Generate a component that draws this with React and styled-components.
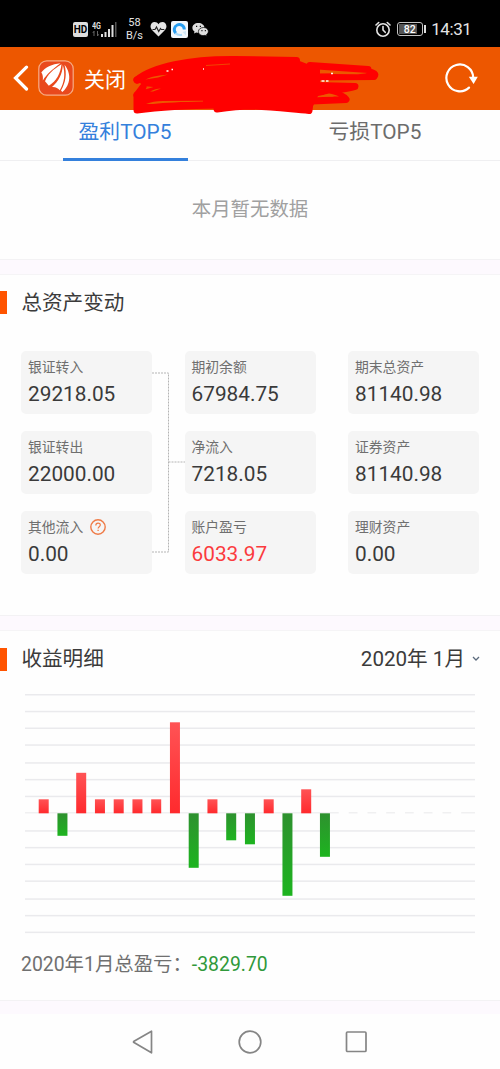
import React, { useState } from 'react'
import styled, { createGlobalStyle } from 'styled-components'

const GlobalStyle = createGlobalStyle`
  * {
    box-sizing:border-box;
  }
  body{
    margin:0;
    background:#fefefe;
    font-family:Roboto, 'Noto Sans CJK SC', sans-serif;
    color:#3b3b3b;
  }
`
const Page = styled.div`
  width:500px;
  height:1069px;
  overflow:hidden;
  display:flex;
  flex-direction:column;
`
const StatusBar = styled.div`
  height:47px;
  flex:none;
  background:#000;
  color:#e4e4e4;
  display:flex;
  align-items:center;
  justify-content:space-between;
  padding:11px 28.5px 0 73px;
`
const StatusGroup = styled.div`
  display:flex;
  align-items:center;
  gap:${props => props.$gap || 4}px;
`
const HdBadge = styled.div`
  width:15px;
  height:15px;
  border-radius:2px;
  background:#dedede;
  color:#000;
  font-size:10px;
  font-weight:700;
  line-height:15px;
  text-align:center;
`
const Speed = styled.div`
  width:22px;
  font-size:11px;
  line-height:13px;
  text-align:center;
  margin:0 .5px 0 1.5px;
`
const Battery = styled.div`
  display:flex;
  align-items:center;
  gap:1px;
  &:after{
    content:'';
    width:2px;
    height:8px;
    background:#dcdcdc;
  }
`
const BatteryBody = styled.div`
  width:26px;
  height:14px;
  border:1px solid #c4c4c4;
  border-radius:3px;
  padding:1px;
  span{
    display:block;
    height:10px;
    line-height:11px;
    font-size:10.5px;
    font-weight:500;
    text-align:center;
    color:#fff;
    background:linear-gradient(90deg, #555 84%, transparent 84%);
  }
`
const Clock = styled.div`
  font-size:17px;
  line-height:20px;
  letter-spacing:-.4px;
`
const Header = styled.div`
  position:relative;
  height:62.5px;
  flex:none;
  background:#ed5700;
  color:#fff;
  display:flex;
  align-items:center;
  padding:0 22px 0 13px;
`
const CloseText = styled.div`
  flex:1;
  font-size:21px;
  line-height:30px;
  margin-left:10px;
  padding-top:3px;
`
const Scribble = styled.svg`
  position:absolute;
  left:130px;
  top:5px;
`
const Tabs = styled.div`
  height:51.5px;
  flex:none;
  display:flex;
  border-bottom:1px solid #efeff1;
`
const Tab = styled.div`
  flex:1;
  display:flex;
  justify-content:center;
  font-size:20.8px;
  line-height:45px;
  color:${props => props.$active ? '#3480dc' : '#6c6c6c'};
  cursor:pointer;
  span{
    width:125px;
    height:51.5px;
    text-align:center;
    white-space:nowrap;
    border-bottom:3px solid ${props => props.$active ? '#3480dc' : 'transparent'};
  }
`
const Empty = styled.div`
  height:98px;
  flex:none;
  line-height:98px;
  text-align:center;
  font-size:19.4px;
  color:#a0a0a0;
`
const Band = styled.div`
  height:${props => props.$height || 16}px;
  flex:none;
  background:#fdf9fe;
  border-top:1px solid #f3f2f4;
  border-bottom:${props => props.$last ? 'none' : '1px solid #f5f4f6'};
`
const SectionHead = styled.div`
  height:56px;
  flex:none;
  display:flex;
  align-items:center;
  justify-content:space-between;
  padding:${props => props.$drop || 0}px 20px 0 0;
  font-size:20.6px;
  line-height:30px;
`
const SectionTitle = styled.div`
  display:flex;
  align-items:center;
  gap:14.4px;
  &:before{
    content:'';
    width:7px;
    height:23px;
    background:#ff5400;
  }
`
const Month = styled.div`
  display:flex;
  align-items:center;
  gap:7px;
`
const Assets = styled.div`
  position:relative;
  height:284px;
  flex:none;
  padding:20.5px 21px 0;
  display:grid;
  grid-template-columns:repeat(3, 131px);
  grid-auto-rows:62.5px;
  align-content:start;
  justify-content:space-between;
  row-gap:17.5px;
`
const Card = styled.div`
  background:#f5f5f5;
  border-radius:5px;
  padding:4px 7px 0;
`
const CardLabel = styled.div`
  display:flex;
  align-items:center;
  gap:7px;
  height:22px;
  font-size:13.8px;
  color:#6f6f6f;
  svg{
    margin-top:2px;
  }
`
const CardValue = styled.div`
  font-size:20.8px;
  line-height:31px;
  padding-top:2px;
  color:${props => props.$profit ? '#fb3b3e' : '#3a3a3a'};
`
const Links = styled.svg`
  position:absolute;
  left:152px;
  top:40px;
`
const Chart = styled.svg`
  display:block;
  flex:none;
`
const Summary = styled.div`
  height:64px;
  flex:none;
  line-height:57px;
  padding-left:21px;
  font-size:19.4px;
  color:#707070;
  span{
    color:#30993a;
  }
`
const NavBar = styled.div`
  flex:1;
  display:flex;
  align-items:center;
  justify-content:center;
  gap:82px;
  padding-top:1px;
`

const cards = [
  { label: '银证转入', value: '29218.05' },
  { label: '期初余额', value: '67984.75' },
  { label: '期末总资产', value: '81140.98' },
  { label: '银证转出', value: '22000.00' },
  { label: '净流入', value: '7218.05' },
  { label: '证券资产', value: '81140.98' },
  { label: '其他流入', value: '0.00', help: true },
  { label: '账户盈亏', value: '6033.97', profit: true },
  { label: '理财资产', value: '0.00' },
]

// bar lengths for every trading day, 0 = no data yet
const days = [14, -22.5, 40.5, 14, 14, 14, 14, 91, -54.5, 14, -27, -31, 14, -82.5, 24, -43.5, 0, 0, 0, 0, 0, 0, 0]
const gridLines = [8, 24.8, 41.5, 58.3, 76.2, 92.9, 109.7, 126, 144.2, 160.9, 177.7, 194.4, 212.3, 228.9, 245.6]
const AXIS = 126.3

function SignalIcon() {
  return (
    <svg width="26" height="17" viewBox="0 0 26 17" fill="#dedede">
      <text x="0" y="8" fontSize="9" fontWeight="700" fontFamily="Roboto" textLength="9" lengthAdjust="spacingAndGlyphs">4G</text>
      <path d="M2 10v5M.8 12L2 10.3M5.500 10v5M6.700 13.300L5.500 15" stroke="#666" fill="none" />
      <path d="M9 13h2v3H9zM12.500 11h2v5h-2zM16 8h2v8h-2zM19.500 4h2v12h-2z" />
      <path d="M23 1h1.500v15H23z" fill="#555" />
    </svg>
  )
}

function HeartIcon() {
  return (
    <svg width="17" height="16" viewBox="0 0 17 16">
      <path d="M8.500 15.500L2 9C-1 5.500 1 1 4.600 1c1.700 0 3.100.9 3.900 2.200C9.300 1.900 10.700 1 12.400 1 16 1 18 5.500 15 9z" fill="#e4e4e4" />
      <path d="M2.500 8.500H5l1.500-2.500 2.200 4.500 1.800-3 .8 1h3" fill="none" stroke="#222" strokeWidth="1.100" />
    </svg>
  )
}

function BrowserIcon() {
  return (
    <svg width="17" height="17" viewBox="0 0 17 17">
      <rect width="17" height="17" rx="2" fill="#f2f7fb" />
      <path d="M5 12.300A5 5 0 1 1 13.300 8.500" fill="none" stroke="#279df0" strokeWidth="3" />
      <path d="M4.500 12c2 2.200 4.500 2.300 6.500 1.800" fill="none" stroke="#a8d8f8" strokeWidth="2" />
      <path d="M11.500 11l3.500-1v4.500z" fill="#cfe6f5" />
    </svg>
  )
}

function WechatIcon() {
  return (
    <svg width="17" height="15" viewBox="0 0 17 15">
      <path d="M6.300 1C2.900 1 .4 3.100.4 5.800c0 1.600.8 2.900 2.100 3.800L2 11.500l2.200-1.100c4.500 1.200 8.300-1 8.300-4.600C12.500 3.100 9.700 1 6.300 1z" fill="#dedede" />
      <path d="M11.500 5.500c-2.900 0-5.100 1.800-5.100 4 0 3 3.300 4.700 6.600 3.800l1.900 1-.5-1.600c3.800-2.800 1.700-7.200-2.900-7.200z" fill="#dedede" stroke="#000" strokeWidth=".7" />
      <path d="M4 4.300h1.200M7.800 4.300H9M9.400 8.700h1.100M12.800 8.700h1.100" stroke="#111" strokeWidth="1.300" />
    </svg>
  )
}

function AlarmIcon() {
  return (
    <svg width="16" height="17" viewBox="0 0 16 17" fill="none" stroke="#e4e4e4" strokeWidth="1.600" strokeLinecap="round">
      <circle cx="8" cy="9" r="6.200" />
      <path d="M8 5.500V9l2.200 2.300M1 4l2.700-2.500M15 4l-2.700-2.500" />
    </svg>
  )
}

function LogoIcon() {
  return (
    <svg width="36" height="36" viewBox="0 0 36 36" style={{ marginLeft: 9 }}>
      <rect x=".8" y=".8" width="34.400" height="34.400" rx="8" fill="#e9491d" stroke="#f7ac85" strokeWidth="1.200" />
      <path d="M22.500 3.300C14 4 7 7.500 3.300 12.500c1.500 2 1.900 4.500 1.500 8C9 14 14 9.500 22.500 3.300z" fill="#fff" />
      <path d="M23.500 4.300C15 9.500 9.500 14.500 7 21.200l3.800 4.600C18.500 21 22.500 13.500 23.500 4.300z" fill="#fff" />
      <path d="M24.800 5C24.500 14 20.500 21.500 14 27c3.500-.3 6 1 7.800 3.300C26.500 22.500 27.500 13.500 24.800 5z" fill="#fff" />
      <path d="M26.500 4.800c4.300 5.500 6 12.200 3.900 18.200-1.300 3.700-3.300 6.700-6.100 9l-1.300-1.500C27.800 22.500 29 13.800 26.500 4.800z" fill="#fff" />
    </svg>
  )
}

function RefreshIcon() {
  return (
    <svg width="34" height="32" viewBox="0 0 34 32">
      <path d="M25 25.600A13.400 13.400 0 1 1 29.200 15.500" fill="none" stroke="#fff" strokeWidth="2.200" strokeLinecap="round" />
      <path d="M24.800 14.700h9L29.600 22z" fill="#fff" />
    </svg>
  )
}

function HelpIcon() {
  return (
    <svg width="16" height="16" viewBox="0 0 16 16" fill="none" stroke="#ef7b47">
      <circle cx="8" cy="8" r="7.200" strokeWidth="1.400" />
      <path d="M5.800 6.400c0-3 4.500-3 4.500-.3 0 1.600-2.200 1.800-2.200 3.500" strokeWidth="1.200" />
      <path d="M8.100 10.700V12" strokeWidth="1.300" />
    </svg>
  )
}

function ProfitChart() {
  return (
    <Chart width="500" height="249" viewBox="0 0 500 249">
      <defs>
        <linearGradient id="up" x1="0" y1="0" x2="0" y2="1">
          <stop offset="0" stopColor="#ff5355" />
          <stop offset="1" stopColor="#ff2a2d" />
        </linearGradient>
        <linearGradient id="down" x1="0" y1="0" x2="0" y2="1">
          <stop offset="0" stopColor="#2e912f" />
          <stop offset="1" stopColor="#1db41f" />
        </linearGradient>
      </defs>
      {gridLines.map(y => <rect key={y} x="25" y={y - 1} width="450" height="1.500" fill={y === 126 ? '#f0f0f1' : '#eaeaed'} />)}
      {days.map((value, index) => {
        const x = 38.7 + index * 18.75
        if (value === 0) return <rect key={index} x={x} y={AXIS - 2} width="10" height="3" fill="#fefefe" />
        return <rect key={index} x={x} y={value > 0 ? AXIS - value : AXIS} width="10" height={Math.abs(value)} fill={value > 0 ? 'url(#up)' : 'url(#down)'} />
      })}
    </Chart>
  )
}

export default function App() {
  const [tab, setTab] = useState(0)

  return (
    <Page>
      <GlobalStyle />
      <StatusBar>
        <StatusGroup>
          <HdBadge>HD</HdBadge>
          <SignalIcon />
          <Speed>58<br />B/s</Speed>
          <HeartIcon />
          <BrowserIcon />
          <WechatIcon />
        </StatusGroup>
        <StatusGroup $gap={5.5}>
          <AlarmIcon />
          <Battery><BatteryBody><span>82</span></BatteryBody></Battery>
          <Clock>14:31</Clock>
        </StatusGroup>
      </StatusBar>
      <Header>
        <svg width="16" height="26" viewBox="0 0 16 26">
          <path d="M13.500 2.200L2.500 13l11 11" fill="none" stroke="#fff" strokeWidth="3.200" strokeLinecap="round" />
        </svg>
        <LogoIcon />
        <CloseText>关闭</CloseText>
        <RefreshIcon />
        <Scribble width="260" height="64" viewBox="130 52 260 64">
          <path d="M137 77L160 66 180 61 225 60 297 60 310 65 320 67 320 92 312 108 247 106 217 106 203 103 137 111 135 95 165 88 142 86z" fill="#f00" />
          <g fill="none" stroke="#f00" strokeWidth="7" strokeLinecap="round" strokeLinejoin="round">
            <path d="M137 80C152 67 190 59 235 59.500L296.500 60.500" />
            <path d="M137 80C160 75 185 72 215 70" />
            <path d="M310 65.500L368 69.500M315 77L374 76.500C376 74 374 73 369 71.500" />
            <path d="M143 87L137 95C145 94 152 91 162 88" />
            <path d="M315 85.500L355 86.500C345 90 330 90 315 93" />
            <path d="M328 91C339 94 344 97 346 99.500L312 101" />
            <path d="M137 95L137 110C160 107 185 105.500 220 105" />
            <path d="M217 109C230 107 240 106 252 106 275 107 290 109 309 110.500L310 102" />
          </g>
          <path d="M145.500 79.500C152 76.500 158 75.500 168 74.500L158 77.500zM150 91.500c4-2 7-2.800 11-3l-8 3zM146 104c5-2 10-2.800 17-3l40-.2v.8c-22 .4-38 1.200-50 2.500zM331 72.500l36 .7-9 1-26-.2zM320 96.500c4-2 6-2.500 9-3 4 .5 7 1.500 10 3z" fill="#ed5700" />
          <path d="M206 65.500l24-1.500" stroke="#ed5700" strokeWidth=".8" />
          <path d="M166.500 71h2M171.500 69.500h1.500M203 69h1M321.500 81h3M326 81h2.500M331 73.500h2" stroke="#fff4ef" strokeWidth="1.600" />
        </Scribble>
      </Header>
      <Tabs>
        <Tab $active={tab === 0} onClick={() => setTab(0)}><span>盈利TOP5</span></Tab>
        <Tab $active={tab === 1} onClick={() => setTab(1)}><span>亏损TOP5</span></Tab>
      </Tabs>
      <Empty>本月暂无数据</Empty>
      <Band $height={15.5} />
      <SectionHead>
        <SectionTitle>总资产变动</SectionTitle>
      </SectionHead>
      <Assets>
        {cards.map(item => (
          <Card key={item.label}>
            <CardLabel>{item.label}{item.help ? <HelpIcon /> : null}</CardLabel>
            <CardValue $profit={item.profit}>{item.value}</CardValue>
          </Card>
        ))}
        <Links width="33" height="182" viewBox="0 0 33 182" fill="none" stroke="#b4b4b4" strokeDasharray="2 1">
          <path d="M0 2h16.500v179H0M16.500 91H33" />
        </Links>
      </Assets>
      <Band />
      <SectionHead $drop={1.5}>
        <SectionTitle>收益明细</SectionTitle>
        <Month>
          2020年 1月
          <svg width="8" height="6" viewBox="0 0 8 6"><path d="M1 1l3 3 3-3" fill="none" stroke="#5c6b7d" strokeWidth="1.300" /></svg>
        </Month>
      </SectionHead>
      <ProfitChart />
      <Summary>2020年1月总盈亏：<span>-3829.70</span></Summary>
      <Band $height={14} $last />
      <NavBar>
        <svg width="24" height="26" viewBox="0 0 24 26" fill="none" stroke="#858585" strokeWidth="1.700" strokeLinejoin="round"><path d="M3 12.200L20.500 2.200v21.600L3 13.600q-1-.7 0-1.400z" /></svg>
        <svg width="26" height="26" viewBox="0 0 26 26" fill="none" stroke="#858585" strokeWidth="1.700"><circle cx="13" cy="13" r="10.800" /></svg>
        <svg width="24" height="26" viewBox="0 0 24 26" fill="none" stroke="#858585" strokeWidth="1.700"><rect x="1.500" y="3" width="19.500" height="19.500" rx="1" /></svg>
      </NavBar>
    </Page>
  )
}
